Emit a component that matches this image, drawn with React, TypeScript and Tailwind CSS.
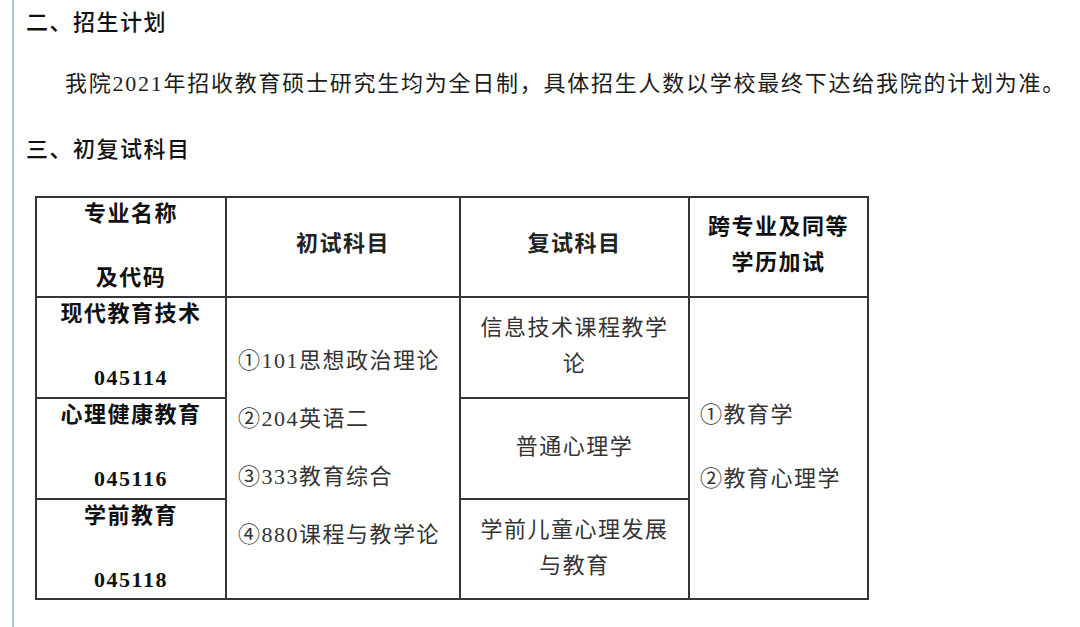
import React from "react";

const serif = "font-['Liberation_Serif','Noto_Sans_CJK_SC',serif]";
const sans = "font-['Noto_Sans_CJK_SC','Liberation_Sans',sans-serif]";

export default function App() {
  return (
    <div className="w-[1080px] h-[627px] bg-white overflow-hidden pl-[12px]">
      <div className="h-full border-l-2 border-[#aac9e6] pl-[12px] pt-[4px]">
        <h2 className={`${sans} text-[22px] leading-[32px] font-medium tracking-[1.5px] text-[#111]`}>
          二、招生计划
        </h2>
        <p
          className={`${serif} mt-[32px] pl-[39px] text-[22px] leading-[32px] tracking-[1.75px] text-[#1c1c1c] whitespace-nowrap`}
        >
          我院2021年招收教育硕士研究生均为全日制，具体招生人数以学校最终下达给我院的计划为准。
        </p>
        <h2 className={`${sans} mt-[31px] text-[22px] leading-[32px] font-medium tracking-[1.5px] text-[#111]`}>
          三、初复试科目
        </h2>
        <table
          className={`${serif} mt-[33px] ml-[9px] w-[834px] table-fixed border-collapse border-2 border-[#363636] text-[22px] tracking-[1.5px]`}
        >
          <colgroup>
            <col className="w-[190px]" />
            <col className="w-[234px]" />
            <col className="w-[229px]" />
            <col className="w-[179px]" />
          </colgroup>
          <tbody>
            <tr className="h-[100px]">
              <td className="border-2 border-[#363636] align-top text-center font-bold leading-[32px] text-[#111] p-0">
                <div>专业名称</div>
                <div>&nbsp;</div>
                <div>及代码</div>
              </td>
              <td className="border-2 border-[#363636] text-center font-bold leading-[36px] text-[#222] p-0 pb-[6px]">
                初试科目
              </td>
              <td className="border-2 border-[#363636] text-center font-bold leading-[36px] text-[#222] p-0 pb-[6px]">
                复试科目
              </td>
              <td className="border-2 border-[#363636] text-center font-bold leading-[36px] text-[#111] p-0 pb-[4px]">
                <div>跨专业及同等</div>
                <div>学历加试</div>
              </td>
            </tr>
            <tr className="h-[101px]">
              <td className="border-2 border-[#363636] align-top text-center font-bold leading-[32px] text-[#111] p-0">
                <div>现代教育技术</div>
                <div>&nbsp;</div>
                <div>045114</div>
              </td>
              <td
                rowSpan={3}
                className="border-2 border-[#363636] align-middle text-left leading-[58px] text-[#333] pl-[11px] pr-0 py-0"
              >
                <div className="whitespace-nowrap">①101思想政治理论</div>
                <div className="whitespace-nowrap">②204英语二</div>
                <div className="whitespace-nowrap">③333教育综合</div>
                <div className="whitespace-nowrap">④880课程与教学论</div>
              </td>
              <td className="border-2 border-[#363636] text-center leading-[36px] text-[#333] p-0 pb-[3px]">
                <div>信息技术课程教学</div>
                <div>论</div>
              </td>
              <td
                rowSpan={3}
                className="border-2 border-[#363636] align-middle text-left leading-[64px] text-[#333] pl-[10px] pr-0 py-0 pb-[2px]"
              >
                <div>①教育学</div>
                <div>②教育心理学</div>
              </td>
            </tr>
            <tr className="h-[101px]">
              <td className="border-2 border-[#363636] align-top text-center font-bold leading-[32px] text-[#111] p-0">
                <div>心理健康教育</div>
                <div>&nbsp;</div>
                <div>045116</div>
              </td>
              <td className="border-2 border-[#363636] text-center leading-[36px] text-[#333] p-0 pb-[4px]">
                普通心理学
              </td>
            </tr>
            <tr className="h-[100px]">
              <td className="border-2 border-[#363636] align-top text-center font-bold leading-[32px] text-[#111] p-0">
                <div>学前教育</div>
                <div>&nbsp;</div>
                <div>045118</div>
              </td>
              <td className="border-2 border-[#363636] text-center leading-[36px] text-[#333] p-0 pb-[3px]">
                <div>学前儿童心理发展</div>
                <div>与教育</div>
              </td>
            </tr>
          </tbody>
        </table>
      </div>
    </div>
  );
}
